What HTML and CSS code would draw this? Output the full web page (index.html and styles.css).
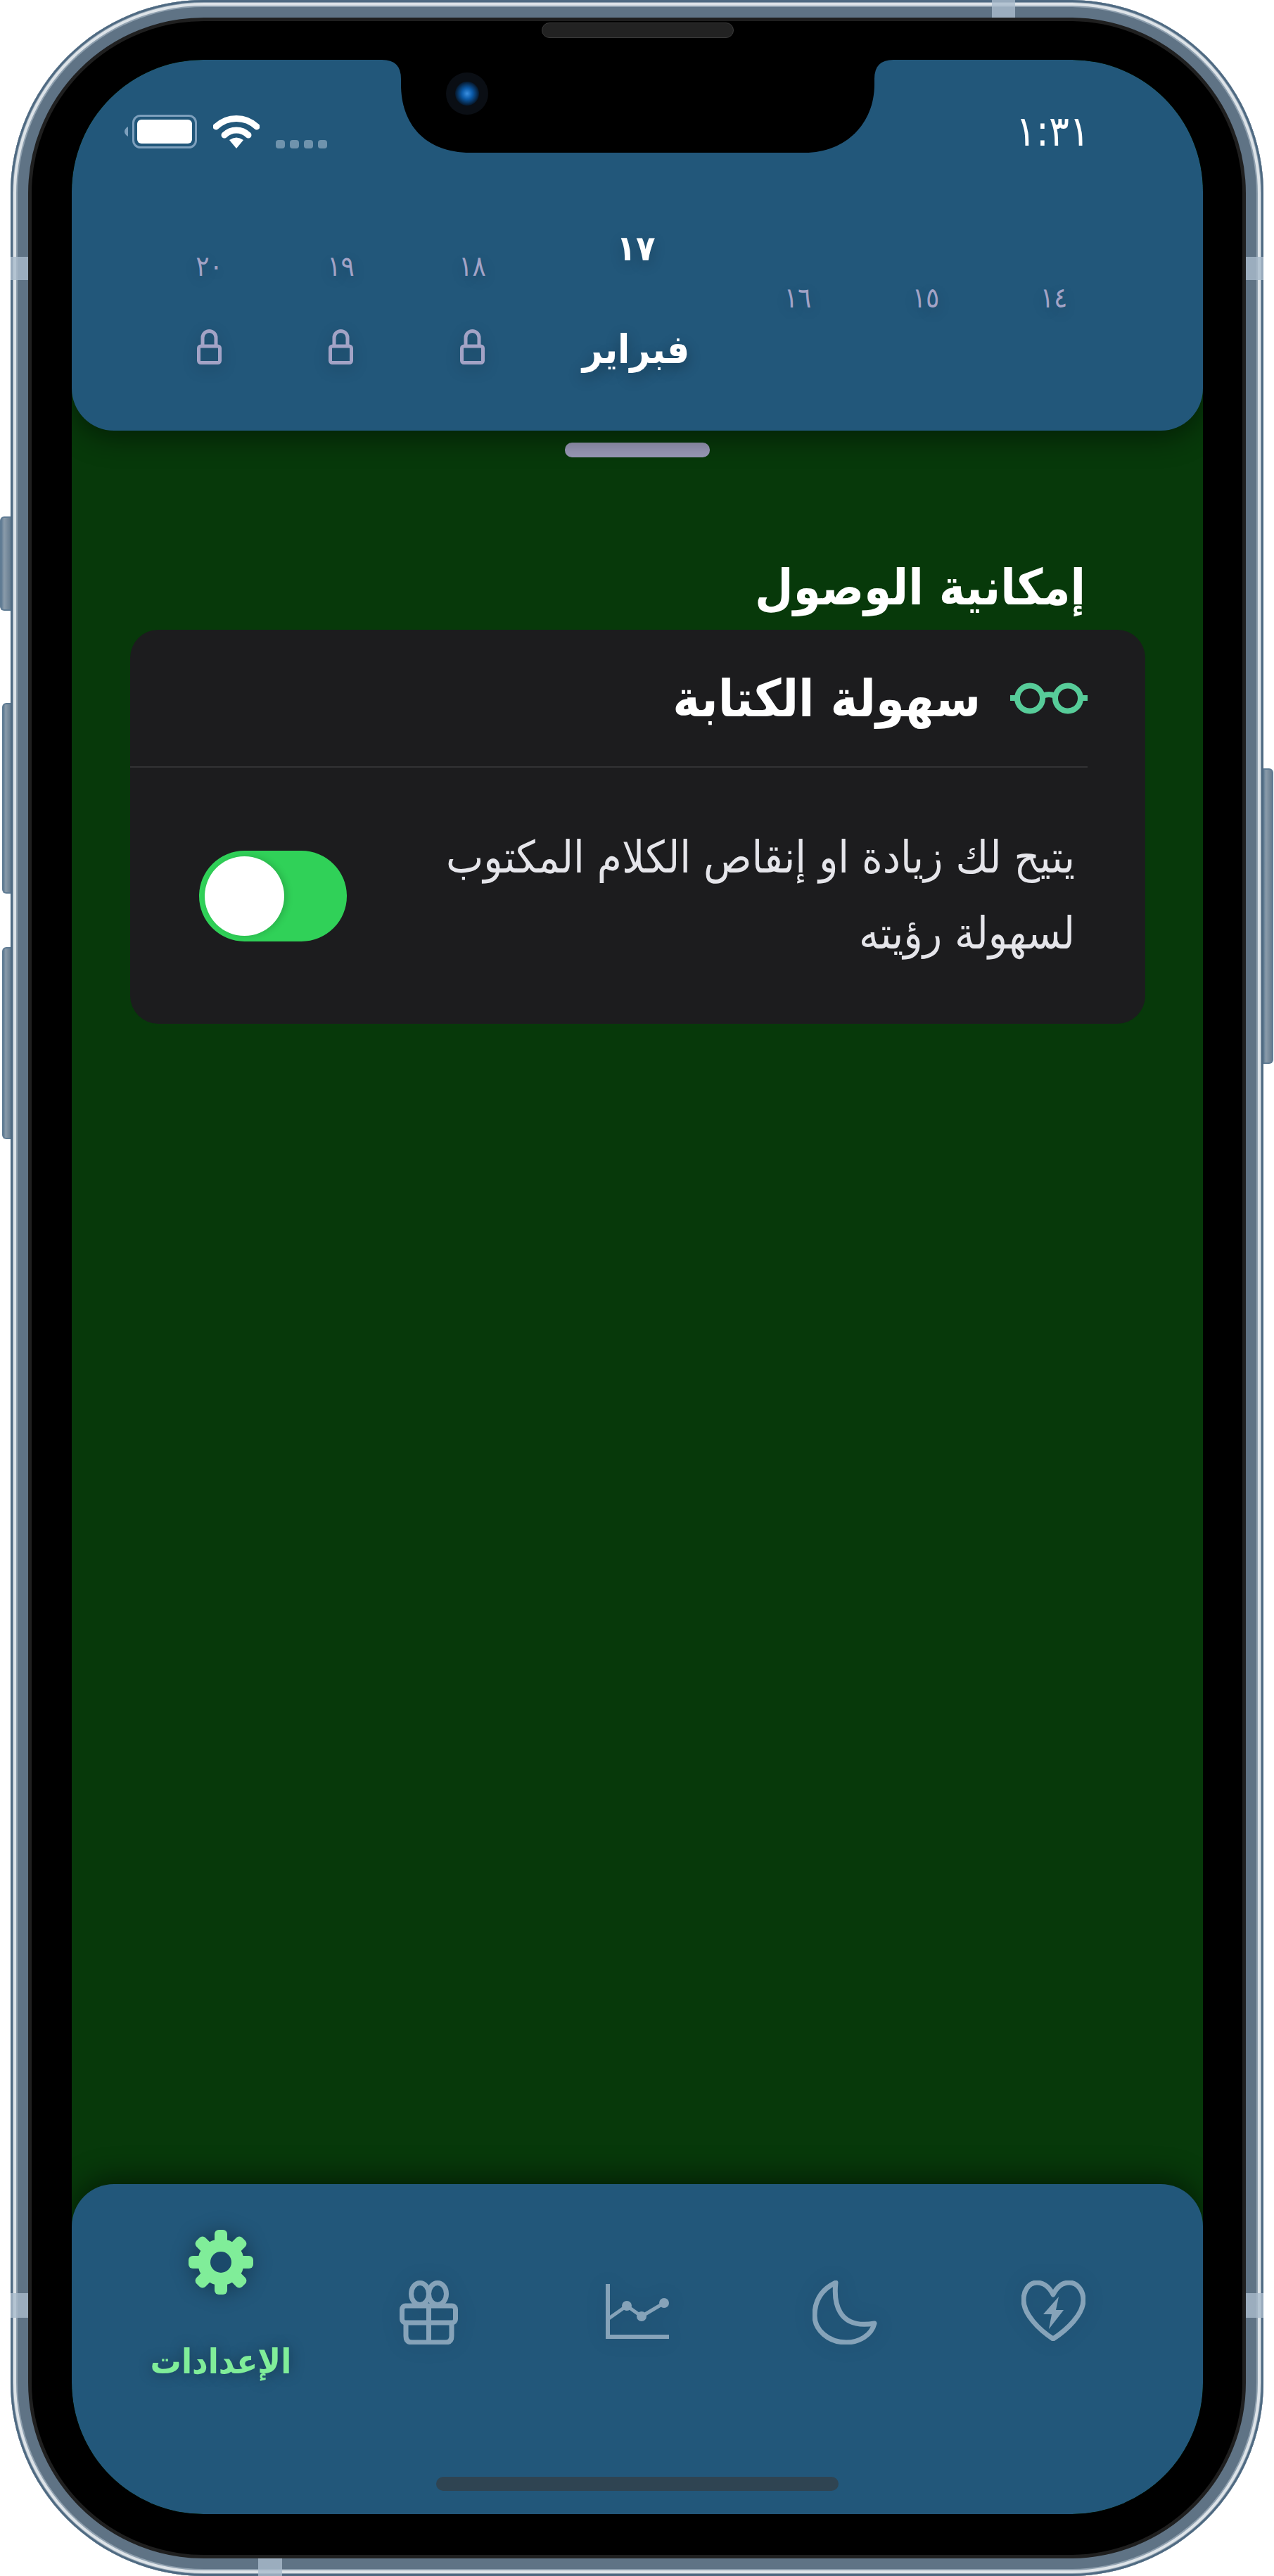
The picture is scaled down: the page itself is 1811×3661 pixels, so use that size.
FILE: index.html
```html
<!DOCTYPE html>
<html lang="ar" dir="rtl">

<head>
    <meta charset="UTF-8">
    <title>سهولة الكتابة</title>
    <link rel="stylesheet" href="styles.css">
</head>

<body>
    <div class="phone">
        <span class="btn btn-mute"></span>
        <span class="btn btn-up"></span>
        <span class="btn btn-down"></span>
        <span class="btn btn-power"></span>
        <span class="band band-left-top"></span>
        <span class="band band-right-top"></span>
        <span class="band band-left-bottom"></span>
        <span class="band band-right-bottom"></span>
        <span class="band band-top"></span>
        <span class="band band-bottom"></span>

        <div class="bezel">
            <span class="speaker"></span>
            <div class="screen">
                <svg class="notch" width="727" height="132" viewBox="0 0 727 132">
                    <defs>
                        <radialGradient id="lens" cx="50%" cy="50%" r="50%">
                            <stop offset="0" stop-color="#3a8fe0" />
                            <stop offset="0.45" stop-color="#0b5aa8" />
                            <stop offset="1" stop-color="#06182c" />
                        </radialGradient>
                    </defs>
                    <path d="M0 0Q27 0 27 27V35C27 90 60 132 126 132H601C660 132 700 90 700 35V27Q700 0 727 0Z" fill="#000" />
                    <circle cx="121" cy="48" r="30" fill="#0a0e14" />
                    <circle cx="121" cy="48" r="17" fill="url(#lens)" />
                </svg>

                <header class="top">
                    <div class="status">
                        <span class="time">١:٣١</span>
                        <div class="status-icons">
                            <svg class="battery" width="104" height="48" viewBox="0 0 104 48">
                                <path d="M6 17Q1 20 1 24T6 31Z" fill="#7ea0bd" />
                                <rect x="13.5" y="1.5" width="89" height="45" rx="10" fill="none" stroke="#7ea0bd" stroke-width="3" />
                                <rect x="19" y="7" width="78" height="34" rx="6" fill="#fff" />
                            </svg>
                            <svg class="wifi" width="66" height="50" viewBox="0 0 66 50">
                                <path d="M4 19A42 42 0 0 1 62 19" fill="none" stroke="#fff" stroke-width="9" stroke-linecap="round" />
                                <path d="M16 31A24 24 0 0 1 50 31" fill="none" stroke="#fff" stroke-width="9" stroke-linecap="round" />
                                <path d="M33 50L23 38Q33 31 43 38Z" fill="#fff" />
                            </svg>
                            <div class="signal"><i></i><i></i><i></i><i></i></div>
                        </div>
                    </div>

                    <div class="days">
                        <div class="day day-open"><span class="num">١٤</span></div>
                        <div class="day day-open"><span class="num">١٥</span></div>
                        <div class="day day-open"><span class="num">١٦</span></div>
                        <div class="day day-active">
                            <span class="num">١٧</span>
                            <span class="month">فبراير</span>
                        </div>
                        <div class="day day-locked">
                            <span class="num">١٨</span>
                            <svg class="lock" width="35" height="50" viewBox="0 0 35 50">
                                <path d="M8 25V12A9.500 9.500 0 0 1 27 12V25" fill="none" stroke="#a3a3c6" stroke-width="5" />
                                <rect x="2.500" y="24" width="30" height="23.500" rx="3" fill="none" stroke="#a3a3c6" stroke-width="5" />
                            </svg>
                        </div>
                        <div class="day day-locked">
                            <span class="num">١٩</span>
                            <svg class="lock" width="35" height="50" viewBox="0 0 35 50">
                                <path d="M8 25V12A9.500 9.500 0 0 1 27 12V25" fill="none" stroke="#a3a3c6" stroke-width="5" />
                                <rect x="2.500" y="24" width="30" height="23.500" rx="3" fill="none" stroke="#a3a3c6" stroke-width="5" />
                            </svg>
                        </div>
                        <div class="day day-locked">
                            <span class="num">٢٠</span>
                            <svg class="lock" width="35" height="50" viewBox="0 0 35 50">
                                <path d="M8 25V12A9.500 9.500 0 0 1 27 12V25" fill="none" stroke="#a3a3c6" stroke-width="5" />
                                <rect x="2.500" y="24" width="30" height="23.500" rx="3" fill="none" stroke="#a3a3c6" stroke-width="5" />
                            </svg>
                        </div>
                    </div>
                </header>

                <main class="content">
                    <div class="grabber"></div>
                    <h2 class="section-title">إمكانية الوصول</h2>
                    <section class="card">
                        <div class="card-head">
                            <svg class="glasses" width="110" height="45" viewBox="0 0 110 45">
                                <g fill="none" stroke="#57cc99" stroke-width="8">
                                    <circle cx="28" cy="22.500" r="18" />
                                    <circle cx="82" cy="22.500" r="18" />
                                    <path d="M46 19Q55 15 64 19" />
                                    <path d="M0 22H10M100 22H110" />
                                </g>
                            </svg>
                            <h3 class="card-title">سهولة الكتابة</h3>
                        </div>
                        <hr class="divider">
                        <div class="card-body">
                            <p class="card-text">يتيح لك زيادة او إنقاص الكلام المكتوب<br>لسهولة رؤيته</p>
                            <div class="toggle"><span class="knob"></span></div>
                        </div>
                    </section>
                </main>

                <nav class="tabs">
                    <div class="tab-row">
                        <div class="tab">
                            <svg width="91" height="86" viewBox="0 0 91 86">
                                <path d="M45 20C38 6 28 3 22 3C10 3 3 15 3 28C3 48 25 70 45 83C65 70 88 48 88 28C88 15 80 3 68 3C60 3 52 6 45 20Z" fill="none" stroke="#86a3b9" stroke-width="7" stroke-linejoin="round" />
                                <path d="M53 23L31 48H43L39 69L60 42H49Z" fill="#86a3b9" />
                            </svg>
                        </div>
                        <div class="tab">
                            <svg width="92" height="91" viewBox="0 0 92 91">
                                <path d="M33 3C30 30 35 70 88 61C84 78 66 88 48 88C22 88 3 70 3 50C3 28 14 12 33 3Z" fill="none" stroke="#86a3b9" stroke-width="7" stroke-linejoin="round" />
                            </svg>
                        </div>
                        <div class="tab">
                            <svg class="tab-chart" width="90" height="78" viewBox="0 0 90 78">
                                <path d="M3 0V75H90" fill="none" stroke="#86a3b9" stroke-width="6" stroke-linecap="round" />
                                <path d="M3 50L30 31L51 46L83 27" fill="none" stroke="#86a3b9" stroke-width="5" />
                                <circle cx="30" cy="31" r="7" fill="#86a3b9" />
                                <circle cx="51" cy="46" r="7" fill="#86a3b9" />
                                <circle cx="83" cy="27" r="7" fill="#86a3b9" />
                            </svg>
                        </div>
                        <div class="tab">
                            <svg width="83" height="91" viewBox="0 0 83 91">
                                <g fill="none" stroke="#86a3b9" stroke-width="7" stroke-linejoin="round">
                                    <rect x="3.500" y="36" width="76" height="24" rx="5" />
                                    <path d="M9 60V79Q9 88 18 88H65Q74 88 74 79V60" />
                                    <path d="M41.500 36V88" />
                                    <ellipse cx="29" cy="19" rx="12.500" ry="15.500" />
                                    <ellipse cx="54" cy="19" rx="12.500" ry="15.500" />
                                </g>
                            </svg>
                        </div>
                        <div class="tab tab-active">
                            <svg class="gear" width="92" height="92" viewBox="0 0 92 92">
                                <circle cx="46" cy="46" r="33" fill="#80ed99" />
                                <g fill="#80ed99">
                                    <rect x="37" y="0" width="18" height="24" rx="6" />
                                    <rect x="37" y="0" width="18" height="24" rx="6" transform="rotate(45 46 46)" />
                                    <rect x="37" y="0" width="18" height="24" rx="6" transform="rotate(90 46 46)" />
                                    <rect x="37" y="0" width="18" height="24" rx="6" transform="rotate(135 46 46)" />
                                    <rect x="37" y="0" width="18" height="24" rx="6" transform="rotate(180 46 46)" />
                                    <rect x="37" y="0" width="18" height="24" rx="6" transform="rotate(225 46 46)" />
                                    <rect x="37" y="0" width="18" height="24" rx="6" transform="rotate(270 46 46)" />
                                    <rect x="37" y="0" width="18" height="24" rx="6" transform="rotate(315 46 46)" />
                                </g>
                                <circle cx="46" cy="46" r="15" fill="#1b4a6b" />
                            </svg>
                            <span class="tab-label">الإعدادات</span>
                        </div>
                    </div>
                    <div class="home-bar"></div>
                </nav>
            </div>
        </div>
    </div>
</body>

</html>
```

FILE: styles.css
```css
* {
    box-sizing: border-box;
}

body {
    margin: 0;
    background-color: #fff;
    font-family: "DejaVu Sans Condensed", "DejaVu Sans", sans-serif;
    color: #fff;
    overflow: hidden;
}

.phone {
    position: relative;
    width: 1781px;
    height: 3661px;
    margin: 0 15px;
    padding: 25px;
    border-radius: 275px;
    background-color: #5f7385;
    box-shadow: inset 0 0 0 3px #4f6a82, inset 0 0 0 4px #8fa0af, inset 0 0 0 8px #dde3e8, inset 0 0 0 10px #8fa0af;
}

.btn {
    position: absolute;
    background: linear-gradient(to right, #5f7b93, #8a9baa 30%, #667c8f);
    border: 2px solid #5f7b93;
    border-right: 0;
    border-radius: 6px 0 0 6px;
}

.btn-mute {
    left: -15px;
    top: 734px;
    width: 15px;
    height: 134px;
}

.btn-up {
    left: -12px;
    top: 999px;
    width: 12px;
    height: 271px;
}

.btn-down {
    left: -12px;
    top: 1346px;
    width: 12px;
    height: 273px;
}

.btn-power {
    right: -14px;
    top: 1092px;
    width: 14px;
    height: 420px;
    border: 2px solid #5f7b93;
    border-left: 0;
    border-radius: 0 6px 6px 0;
}

.band {
    position: absolute;
    background-color: rgba(170, 188, 204, 0.8);
}

.band-left-top,
.band-left-bottom {
    left: 0;
    width: 25px;
}

.band-right-top,
.band-right-bottom {
    right: 0;
    width: 25px;
}

.band-left-top,
.band-right-top {
    top: 365px;
    height: 33px;
}

.band-left-bottom,
.band-right-bottom {
    top: 3259px;
    height: 35px;
}

.band-top {
    top: 0;
    left: 1395px;
    width: 33px;
    height: 25px;
}

.band-bottom {
    bottom: 0;
    left: 352px;
    width: 34px;
    height: 25px;
}

.bezel {
    position: relative;
    height: 100%;
    padding: 55px 56px 58px 57px;
    border: 5px solid #1f1f1f;
    border-radius: 250px;
    background-color: #000;
}

.speaker {
    position: absolute;
    left: 725px;
    top: 2px;
    width: 273px;
    height: 22px;
    border: 1px solid #3a3a3a;
    border-radius: 11px;
    background-color: #222;
}

.screen {
    position: relative;
    display: flex;
    flex-direction: column;
    height: 100%;
    border-radius: 187px;
    background-color: #07390a;
    overflow: hidden;
}

.notch {
    position: absolute;
    left: 441px;
    top: 0;
    z-index: 2;
}

.top {
    position: relative;
    z-index: 1;
    height: 527px;
    flex: none;
    border-radius: 187px 187px 60px 60px;
    background-color: #22577a;
    box-shadow: 0 10px 40px rgba(0, 0, 0, 0.45);
}

.status {
    display: flex;
    justify-content: space-between;
    padding: 76px 161px 0 74px;
    height: 126px;
}

.time {
    font-size: 60px;
    line-height: 50px;
}

.status-icons {
    direction: ltr;
    display: flex;
    align-items: flex-end;
    gap: 23px;
}

.signal {
    display: flex;
    gap: 7px;
}

.signal i {
    width: 13px;
    height: 12px;
    border-radius: 4px;
    background-color: #6f93ad;
}

.days {
    display: flex;
    margin-top: 109px;
    padding-right: 121px;
}

.day {
    display: flex;
    flex-direction: column;
    align-items: center;
    width: 182px;
}

.num {
    font-size: 40px;
    line-height: 40px;
    color: #a3a3c6;
    text-shadow: 0 6px 20px rgba(0, 0, 0, 0.2);
}

.day-open {
    padding-top: 83px;
}

.day-locked {
    width: 187px;
    padding-top: 38px;
}

.lock {
    margin-top: 70px;
    filter: drop-shadow(0 6px 10px rgba(0, 0, 0, 0.2));
}

.day-active {
    width: 278px;
    padding-top: 13px;
}

.day-active .num {
    font-size: 50px;
    font-weight: bold;
    color: #fff;
}

.month {
    margin-top: 94px;
    font-size: 56px;
    line-height: 60px;
    font-weight: bold;
    text-shadow: 0 6px 20px rgba(0, 0, 0, 0.3);
}

.content {
    flex: 1;
}

.grabber {
    width: 206px;
    height: 21px;
    margin: 17px auto 0;
    border-radius: 10px;
    background-color: #9a9ab8;
}

.section-title {
    margin: 152px 167px 0 0;
    font-size: 70px;
    line-height: 66px;
    font-weight: bold;
}

.card {
    margin: 27px 82px 0 83px;
    height: 560px;
    border-radius: 40px;
    background-color: #1c1c1e;
}

.card-head {
    display: flex;
    align-items: center;
    gap: 42px;
    height: 194px;
    padding-right: 82px;
}

.card-title {
    margin: 0;
    font-size: 73px;
    font-weight: bold;
}

.divider {
    height: 2px;
    margin: 0 82px 0 0;
    border: 0;
    background-color: #323234;
}

.card-body {
    display: flex;
    justify-content: space-between;
    align-items: center;
    padding: 0 100px 0 98px;
    height: 364px;
}

.card-text {
    margin: 0;
    font-size: 63px;
    line-height: 108px;
    color: #e5e5ea;
}

.toggle {
    position: relative;
    flex: none;
    width: 210px;
    height: 129px;
    border-radius: 65px;
    background-color: #30d158;
}

.knob {
    position: absolute;
    left: 8px;
    top: 8px;
    width: 113px;
    height: 113px;
    border-radius: 50%;
    background-color: #fff;
    box-shadow: 4px 0 10px rgba(0, 0, 0, 0.15);
}

.tabs {
    position: relative;
    z-index: 1;
    display: flex;
    flex-direction: column;
    height: 469px;
    flex: none;
    border-radius: 60px 60px 187px 187px;
    background-color: #22577a;
    box-shadow: 0 -10px 40px rgba(0, 0, 0, 0.45);
}

.tab-row {
    display: flex;
    padding: 0 65px 0 64px;
}

.tab {
    display: flex;
    flex-direction: column;
    align-items: center;
    width: 296px;
    padding-top: 137px;
}

.tab svg {
    filter: drop-shadow(0 0 14px rgba(0, 0, 0, 0.1));
}

.tab .tab-chart {
    margin-top: 5px;
}

.tab-active {
    padding-top: 65px;
}

.tab .gear {
    filter: drop-shadow(0 0 14px rgba(0, 0, 0, 0.35));
}

.tab-label {
    margin-top: 66px;
    font-size: 49px;
    font-weight: bold;
    line-height: 60px;
    color: #80ed99;
    text-shadow: 0 0 20px rgba(0, 0, 0, 0.35);
}

.home-bar {
    width: 572px;
    height: 20px;
    margin: auto auto 33px;
    border-radius: 10px;
    background-color: #2f4452;
}
```
